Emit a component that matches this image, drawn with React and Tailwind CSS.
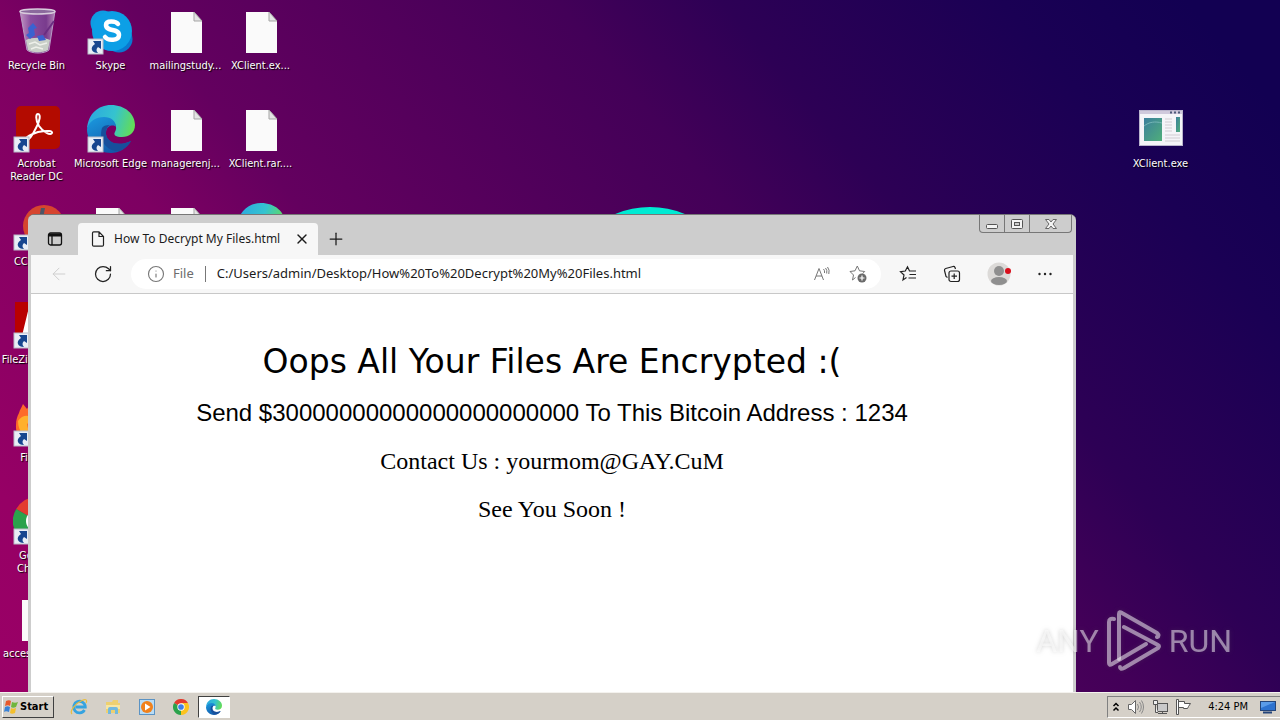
import { useState } from "react";
import { RotateCw, ArrowLeft, Plus, X, Info } from "lucide-react";

const page = {
  title: "How To Decrypt My Files.html",
  url: "C:/Users/admin/Desktop/How%20To%20Decrypt%20My%20Files.html",
};

function ShortcutArrow() {
  return (
    <g>
      <rect x="1" y="32" width="15" height="15" fill="#e9eef6" stroke="#b9bcc8" />
      <path d="M6 34h8v8l-3-2c-2 2-2 4 0 6-6 0-9-5-3-9z" fill="#17468f" />
    </g>
  );
}

function IconBox({ children, shortcut }) {
  return (
    <svg className="w-12 h-12 shrink-0" viewBox="0 0 48 48" aria-hidden="true">
      {children}
      {shortcut && <ShortcutArrow />}
    </svg>
  );
}

function FileIcon() {
  return (
    <IconBox>
      <path d="M9 5h23l8 9v32H9z" fill="#fafafa" />
      <path d="M32 5v9h8z" fill="#e4e4e4" stroke="#a5a5a5" />
    </IconBox>
  );
}

function RecycleIcon() {
  return (
    <IconBox>
      <defs>
        <linearGradient id="glass" x1="0" x2="1">
          <stop offset="0" stopColor="#d9c6e2" stopOpacity=".75" />
          <stop offset=".3" stopColor="#8f62ae" stopOpacity=".8" />
          <stop offset=".75" stopColor="#7a4a98" stopOpacity=".8" />
          <stop offset="1" stopColor="#cdb5d8" stopOpacity=".7" />
        </linearGradient>
      </defs>
      <path d="M7 4h35l-6 39c-4 4-18 4-22 0z" fill="url(#glass)" stroke="#b79cc6" />
      <path d="M13 33c5-3 18-3 24 0l-2 10c-5 3-16 3-20 0z" fill="#c9cfc8" />
      <path d="M16 37l6-2 5 3 7-2M18 42l5-2 7 2" stroke="#eef0ea" strokeWidth="1.500" fill="none" />
      <path d="M15 21l5-5 4 5-3 1 1 6-5 4-4-4 3-2zM24 29l6-1 3 5-7 1z" fill="#3b62d0" />
      <path d="M41 14l-10 14" stroke="#6b2e82" strokeWidth="2" />
      <ellipse cx="24.500" cy="4.500" rx="17.500" ry="2.500" fill="#8b6a9d" stroke="#d8cbdc" strokeWidth="1.500" />
    </IconBox>
  );
}

function SkypeIcon() {
  return (
    <IconBox shortcut>
      <circle cx="16" cy="16" r="12.500" fill="#0f9be2" />
      <circle cx="32" cy="32" r="13.500" fill="#0a79d0" />
      <circle cx="25" cy="24" r="20" fill="#0c9fe6" />
      <path d="M31 17c-2-3-12-4-12 1 0 7 13 3 13 10 0 6-11 6-14 2" fill="none" stroke="#fff" strokeWidth="4.500" strokeLinecap="round" />
    </IconBox>
  );
}

function AcrobatIcon() {
  return (
    <IconBox shortcut>
      <rect x="3" y="1" width="44" height="43" rx="5" fill="#b30b00" />
      <path
        d="M14 35c-4 0 1-5 11-8 10-2 15-1 14 1-1 3-9-1-13-7-4-7-3-12-1-12 3 0 2 7-2 14-3 6-7 12-9 12z"
        fill="none"
        stroke="#fff"
        strokeWidth="2"
      />
    </IconBox>
  );
}

function EdgeArt() {
  return (
    <>
      <defs>
        <linearGradient id="edgeTop" x1="0" y1=".3" x2="1" y2=".5">
          <stop offset="0" stopColor="#2ba8e0" />
          <stop offset=".55" stopColor="#35c3cf" />
          <stop offset="1" stopColor="#63dc57" />
        </linearGradient>
        <linearGradient id="edgeLeft" x1="0" y1="0" x2=".6" y2="1">
          <stop offset="0" stopColor="#1b9be0" />
          <stop offset="1" stopColor="#1257a8" />
        </linearGradient>
      </defs>
      <path d="M0 24C1 9 11 0 24 0c14 0 24 9 24 20 0 8-6 12-13 12-6 0-9-2-7-5 3-5 0-11-7-12C12 13 3 16 0 24z" fill="url(#edgeTop)" />
      <path d="M0 24c2-8 9-12 17-12 7 0 12 4 12 10-1-2-9-3-10 5-1 9 9 16 25 9-5 8-12 12-20 12C10 48 0 37 0 24z" fill="url(#edgeLeft)" />
      <path d="M15 23c-4 13 6 24 17 23 6-2 10-6 12-10-14 7-26 0-25-9 0-3 2-6 4-7-4 0-7 1-8 3z" fill="#174f9c" />
    </>
  );
}

function ChromeArt() {
  return (
    <>
      <path d="M24 24L3.200 12A24 24 0 0 1 44.800 12z" fill="#e33b2e" />
      <path d="M24 24L44.800 12A24 24 0 0 1 24 48z" fill="#fcc31e" />
      <path d="M24 24v24A24 24 0 0 1 3.200 12z" fill="#2ba24c" />
      <path d="M24 12h20.800L34 30z" fill="#fcc31e" />
      <circle cx="24" cy="24" r="11" fill="#fff" />
      <circle cx="24" cy="24" r="8.500" fill="#3f7fe8" />
    </>
  );
}

function EdgeIcon({ shortcut }) {
  return (
    <IconBox shortcut={shortcut}>
      <EdgeArt />
    </IconBox>
  );
}

function CCleanerIcon() {
  return (
    <IconBox shortcut>
      <circle cx="31" cy="23" r="21" fill="#d6452f" />
      <path d="M28 5h4l-3 16h-4z" fill="#4c5566" />
      <path d="M24 20l10 4-6 20H8c8-5 12-14 16-24z" fill="#f3cf9c" />
    </IconBox>
  );
}

function FileZillaIcon() {
  return (
    <IconBox shortcut>
      <rect x="2" y="1" width="44" height="44" fill="#b90000" />
      <path d="M16 6h22l-2 6H22l-2 9h10l-2 6H18l-4 16H7z" fill="#fff" />
    </IconBox>
  );
}

function FirefoxIcon() {
  return (
    <IconBox shortcut>
      <path d="M6 14c1-4 3-6 4-9l4 5c2-4 5-6 9-7 10 0 23 9 23 23 0 12-9 20-21 20S2 39 3 26c0-5 1-8 3-12z" fill="#fd6a2b" />
      <path d="M5 22c4-6 11-7 15-2l-6 5c1 10 8 13 16 12-8 7-25 2-25-15z" fill="#ffb02e" />
    </IconBox>
  );
}

function ChromeIcon() {
  return (
    <IconBox shortcut>
      <ChromeArt />
    </IconBox>
  );
}

function ProgramIcon() {
  return (
    <IconBox>
      <defs>
        <linearGradient id="pane" x1="0" y1="0" x2="1" y2="1">
          <stop offset="0" stopColor="#3c7f9d" />
          <stop offset="1" stopColor="#4fae7a" />
        </linearGradient>
      </defs>
      <rect x="2.500" y="5.500" width="43" height="35" fill="#f4f4f8" stroke="#b9b4cc" />
      <path d="M3 7.500h42" stroke="#cfc9dc" strokeWidth="3" />
      <path d="M33 7.500h2m2 0h2m2 0h2" stroke="#4d5878" strokeWidth="2" />
      <rect x="7" y="13" width="18" height="23" fill="url(#pane)" />
      <path d="M7 21c5-4 11-5 18-3" stroke="#76b5b6" fill="none" />
      <path d="M28 14h7m-7 3h7m-7 3h7m-7 3h7m-7 3h7m-7 4h15m-15 3h15m-15 3h15" stroke="#d0ccd2" />
      <rect x="39" y="12" width="4" height="15" fill="url(#pane)" />
    </IconBox>
  );
}

const desktopIcons = [
  { label: "Recycle Bin", Icon: RecycleIcon, cell: "col-start-1 row-start-1" },
  { label: "Acrobat\nReader DC", Icon: AcrobatIcon, cell: "col-start-1 row-start-2" },
  { label: "CCleaner", Icon: CCleanerIcon, cell: "col-start-1 row-start-3" },
  { label: "FileZilla Client", Icon: FileZillaIcon, cell: "col-start-1 row-start-4" },
  { label: "Firefox", Icon: FirefoxIcon, cell: "col-start-1 row-start-5" },
  { label: "Google\nChrome", Icon: ChromeIcon, cell: "col-start-1 row-start-6" },
  { label: "accessories...", Icon: FileIcon, cell: "col-start-1 row-start-7" },
  { label: "Skype", Icon: SkypeIcon, cell: "col-start-2 row-start-1" },
  { label: "Microsoft Edge", Icon: () => <EdgeIcon shortcut />, cell: "col-start-2 row-start-2" },
  { label: "", Icon: FileIcon, cell: "col-start-2 row-start-3" },
  { label: "mailingstudy...", Icon: FileIcon, cell: "col-start-3 row-start-1" },
  { label: "managerenj...", Icon: FileIcon, cell: "col-start-3 row-start-2" },
  { label: "", Icon: FileIcon, cell: "col-start-3 row-start-3" },
  { label: "XClient.ex...", Icon: FileIcon, cell: "col-start-4 row-start-1" },
  { label: "XClient.rar....", Icon: FileIcon, cell: "col-start-4 row-start-2" },
  { label: "", Icon: EdgeIcon, cell: "col-start-4 row-start-3" },
];

function DesktopIcon({ label, Icon, cell = "" }) {
  return (
    <button className={`flex flex-col items-center gap-1 ${cell}`} aria-label={label || "Desktop item"}>
      <Icon />
      <span className="text-[11px] leading-[13px] text-white text-center whitespace-pre [text-shadow:1px_1px_1px_#000]">
        {label}
      </span>
    </button>
  );
}

function WindowButtons() {
  return (
    <div className="ml-auto mr-px self-start flex h-[18px] border border-t-0 border-[#777] rounded-b divide-x divide-[#777]">
      <button className="w-[25px] flex items-center justify-center" aria-label="Minimize">
        <svg className="w-3 h-3" viewBox="0 0 12 12" fill="#f4f4f4" stroke="#555">
          <rect x=".5" y="6.500" width="11" height="4" rx="1" />
        </svg>
      </button>
      <button className="w-[25px] flex items-center justify-center" aria-label="Maximize">
        <svg className="w-3 h-3" viewBox="0 0 12 12" fill="#f4f4f4" stroke="#555">
          <rect x=".5" y="1.500" width="11" height="9" rx="1" />
          <rect x="3.500" y="4.500" width="5" height="3" fill="#ccc" />
        </svg>
      </button>
      <button className="w-[41px] flex items-center justify-center" aria-label="Close">
        <svg className="w-3 h-3" viewBox="0 0 12 12" fill="#f4f4f4" stroke="#666">
          <path d="M.5 1.500h3.500l2 2.500 2-2.500h3.500L8 6l3.500 4.500H8L6 8l-2 2.500H.5L4 6z" />
        </svg>
      </button>
    </div>
  );
}

function TabStrip() {
  return (
    <div className="flex items-end h-10 bg-[#cdcdcd] text-[#1b1b1b]">
      <button className="w-[47px] h-8 flex items-center justify-center" aria-label="Tab actions">
        <svg className="w-4 h-4" viewBox="0 0 16 16" fill="none" stroke="#111" strokeWidth="1.300">
          <rect x="1.500" y="2" width="13" height="12" rx="2" />
          <path d="M2 4h12" strokeWidth="3" />
          <path d="M5 5v9" />
        </svg>
      </button>
      <div className="w-60 h-8 flex items-center pl-3 pr-2 gap-2 rounded-t bg-[#f7f7f7]">
        <svg className="w-4 h-4 shrink-0" viewBox="0 0 16 16" fill="none" stroke="#222" strokeWidth="1.200">
          <path d="M2.500 2Q2.500 .8 3.700 .8H9l4.500 4.700v8.500q0 1.200-1.200 1.200H3.700q-1.200 0-1.200-1.200zM9 1v4.500h4.500" />
        </svg>
        <span className="flex-1 text-xs whitespace-nowrap">{page.title}</span>
        <button aria-label="Close tab">
          <X className="w-4 h-4" strokeWidth={2} />
        </button>
      </div>
      <button className="w-9 h-8 flex items-center justify-center" aria-label="New tab">
        <Plus className="w-5 h-5" strokeWidth={1.5} />
      </button>
      <WindowButtons />
    </div>
  );
}

function Toolbar() {
  const [url, setUrl] = useState(page.url);

  return (
    <div className="flex items-center h-[39px] bg-[#f7f7f7] border-b border-[#c8c8c8] text-[#222]">
      <button className="w-14 flex justify-center text-[#cfcfcf]" aria-label="Back">
        <ArrowLeft className="w-5 h-5" strokeWidth={1.2} />
      </button>
      <button className="w-8 flex justify-center" aria-label="Refresh">
        <RotateCw className="w-5 h-5" strokeWidth={1.5} />
      </button>
      <div className="flex-1 min-w-0 h-[30px] ml-3 flex items-center gap-2 pl-4 pr-3.5 bg-white rounded-full text-[13px]">
        <Info className="w-[18px] h-[18px] shrink-0 text-[#777]" strokeWidth={1.5} />
        <label htmlFor="address" className="text-[#6d6d6d]">File</label>
        <span className="w-px h-4 mx-[3px] bg-[#777]" />
        <input
          id="address"
          className="flex-1 min-w-0 outline-none text-[#1b1b1b]"
          value={url}
          onChange={(e) => setUrl(e.target.value)}
        />
        <button className="mr-2.5" aria-label="Read aloud">
          <svg className="w-[18px] h-[18px]" viewBox="0 0 18 18" fill="none" stroke="#777">
            <path d="M1.500 15L6 3.500l4.500 11.500M3 11h6M10.500 4q1.500 1.500 1 4M12.500 3q2 2 1.200 5.500M14.500 2q2.500 3 1.300 7" />
          </svg>
        </button>
        <button aria-label="Add to favorites">
          <svg className="w-[18px] h-[18px]" viewBox="0 0 18 18" fill="none" stroke="#777">
            <path d="M6.500 12.500L3.500 15l1-5L1 6.500l5-.7L8.300 1l2.200 4.800 5.200.7-2 2" />
            <circle cx="13" cy="13" r="4.500" fill="#6a6a6a" stroke="none" />
            <path d="M13 10.500v5M10.500 13h5" stroke="#fff" strokeWidth="1.200" />
          </svg>
        </button>
      </div>
      <div className="flex items-center pl-[18px] pr-5 gap-[26px]">
        <button aria-label="Favorites">
          <svg className="w-[18px] h-[18px]" viewBox="0 0 18 18" fill="none" stroke="#222" strokeWidth="1.200">
            <path d="M7.500 12.500L4 15l1-5L1.500 6.700l4.800-.7L8.500 1.800 10.500 6H17M10.500 9.500H17M9.500 13H17" />
          </svg>
        </button>
        <button aria-label="Collections">
          <svg className="w-[18px] h-[18px]" viewBox="0 0 18 18" fill="none" stroke="#222" strokeWidth="1.200">
            <rect x="6" y="6" width="10.500" height="10.500" rx="2" />
            <path d="M11.200 8.500v5.500M8.500 11.200H14M4.500 12.500L3 11.500 1.500 5.500Q1.200 4 2.700 3.500L10 1.500q1.500-.3 2 1l.5 1.500" />
          </svg>
        </button>
        <button aria-label="Profile">
          <svg className="w-6 h-6" viewBox="0 0 24 24">
            <circle cx="12" cy="12" r="11.500" fill="#dcdad8" />
            <circle cx="12" cy="9" r="5" fill="#8f8f8f" />
            <ellipse cx="12" cy="19" rx="8" ry="4" fill="#8f8f8f" />
            <circle cx="21" cy="9" r="3" fill="#d90f1c" />
          </svg>
        </button>
        <button aria-label="Settings and more">
          <svg className="w-4 h-4" viewBox="0 0 16 16" fill="#222">
            <circle cx="2.500" cy="8" r="1.200" />
            <circle cx="8" cy="8" r="1.200" />
            <circle cx="13.500" cy="8" r="1.200" />
          </svg>
        </button>
      </div>
    </div>
  );
}

function BrowserWindow() {
  return (
    <section className="absolute left-7 right-[204px] top-[214px] bottom-0 flex flex-col px-[3px] bg-[#cdcdcd] border-t border-[#777] rounded-t-md overflow-hidden font-['Noto_Sans','Open_Sans',sans-serif]">
      <TabStrip />
      <Toolbar />
      <article className="flex-1 pt-11 bg-white text-black text-center text-2xl leading-[48px]">
        <h1 className="mb-[3px] text-[33px] leading-[48px] font-['DejaVu_Sans',sans-serif]">
          Oops All Your Files Are Encrypted :(
        </h1>
        <p className="font-['Liberation_Sans',sans-serif]">
          Send $30000000000000000000000 To This Bitcoin Address : 1234
        </p>
        <p className="font-['Liberation_Serif',serif]">Contact Us : yourmom@GAY.CuM</p>
        <p className="font-['Liberation_Serif',serif]">See You Soon !</p>
      </article>
    </section>
  );
}

function Watermark() {
  return (
    <div className="absolute right-12 bottom-5 flex items-center gap-2 text-[32px] leading-[62px] text-white/50 font-['Roboto',sans-serif] [filter:drop-shadow(0_0_2px_rgba(90,90,90,0.5))]">
      <span>ANY</span>
      <svg className="w-[54px] h-[62px]" viewBox="0 0 54 62" fill="none" stroke="currentColor" strokeWidth="4" strokeLinejoin="round" strokeLinecap="round">
        <path d="M7 9Q2 8 2 12v41q0 3 3 1l34-20" />
        <path d="M12 49V4q0-3 3-1l35 20q3 3 0 4" />
        <path d="M17 17l34 18q2 1 0 3L17 58q-4 2-4-1" />
      </svg>
      <span>RUN</span>
    </div>
  );
}

function StartLogo() {
  return (
    <svg className="w-4 h-4" viewBox="0 0 16 16" aria-hidden="true">
      <path d="M3 2c2-1 4-1 5 0L7 7c-1-1-3-1-5 0z" fill="#e8592b" />
      <path d="M9 3c2 1 4 1 6 0l-2 5c-2 1-4 1-5 0z" fill="#6fb63d" />
      <path d="M2 8c2-1 3-1 5 0l-1 5c-2-1-4-1-5 0z" fill="#3a82d6" />
      <path d="M8 9c1 1 3 1 5 0l-1 5c-2 1-4 1-5 0z" fill="#f4bf2c" />
    </svg>
  );
}

function Taskbar() {
  return (
    <footer className="h-7 shrink-0 flex items-center pt-px pl-0.5 bg-[#d5d0c8] border-t border-[#f4f2ee] text-[11px] text-black">
      <button className="h-[22px] w-[52px] flex items-center gap-px font-bold border border-t-white border-l-white border-r-[#404040] border-b-[#404040]">
        <StartLogo />
        Start
      </button>
      <nav className="ml-2 flex items-center">
        <button className="w-[34px] flex justify-center" aria-label="Internet Explorer">
          <svg className="w-[18px] h-[18px]" viewBox="0 0 18 18" fill="none">
            <path d="M14.500 12a5.800 5.800 0 1 1 .8-3H5.500" stroke="#35a3e0" strokeWidth="2.800" />
            <path d="M2 16C-1 13 6 5 12 2.500c4-2 5.500-.5 4 2.500" stroke="#e9bd3d" strokeWidth="1.200" />
          </svg>
        </button>
        <button className="w-[34px] flex justify-center" aria-label="File Explorer">
          <svg className="w-4 h-4" viewBox="0 0 16 16">
            <path d="M1 3h6l1-2h5v3h2v10H1z" fill="#edd070" />
            <path d="M1 6h14v4H1z" fill="#f7e6a2" />
            <path d="M3 15v-5q0-2 2-2h6q2 0 2 2v5h-3v-4H6v4z" fill="#72b9de" />
          </svg>
        </button>
        <button className="w-[34px] flex justify-center" aria-label="Media Player">
          <svg className="w-4 h-4" viewBox="0 0 16 16">
            <rect x=".5" y=".5" width="15" height="15" fill="#b9dcf5" stroke="#5b93c4" />
            <circle cx="8" cy="8" r="6" fill="#f1811b" />
            <path d="M6 4.500v7L11.500 8z" fill="#fff" />
          </svg>
        </button>
        <button className="w-[34px] flex justify-center" aria-label="Chrome">
          <svg className="w-4 h-4" viewBox="0 0 48 48"><ChromeArt /></svg>
        </button>
        <button className="w-8 h-[22px] flex items-center justify-center bg-white border border-t-[#404040] border-l-[#404040] border-r-white border-b-white" aria-label="Microsoft Edge">
          <svg className="w-4 h-4" viewBox="0 0 48 48"><EdgeArt /></svg>
        </button>
      </nav>
      <div className="ml-auto h-[22px] flex items-center gap-2 px-1 border border-r-0 border-t-[#808080] border-l-[#808080] border-b-white">
        <button aria-label="Show hidden icons">
          <svg className="w-2 h-3" viewBox="0 0 8 12" fill="none" stroke="#000" strokeWidth="1.500">
            <path d="M1.500 5L4 2.500 6.500 5M1.500 9.500L4 7l2.500 2.500" />
          </svg>
        </button>
        <button aria-label="Volume">
          <svg className="w-4 h-4" viewBox="0 0 16 16" fill="#fff" stroke="#666">
            <path d="M.5 5.500h3l4-4v13l-4-4h-3z" />
            <path d="M9.500 5q2 3 0 6M11.500 3q3.500 5 0 10M13.500 1.500q4 6.500 0 13" fill="none" stroke="#888" />
          </svg>
        </button>
        <button aria-label="Network">
          <svg className="w-4 h-4" viewBox="0 0 16 16" fill="#eee" stroke="#555">
            <rect x="5.500" y="4.500" width="10" height="8" fill="#c9c9c9" />
            <path d="M6 14.500h9M10.500 12.500v2" />
            <path d="M1.500 1.500h4v4h-4zM3.500 6v7.500H6" />
          </svg>
        </button>
        <button aria-label="Action Center">
          <svg className="w-4 h-4" viewBox="0 0 16 16" fill="#fff" stroke="#555">
            <path d="M.5.500h2v15h-2zM2.500 2.500h6v2h6l-2 3-1 2h-4v-1h-5z" />
          </svg>
        </button>
        <time className="ml-2">4:24 PM</time>
        <button className="ml-1" aria-label="Show desktop">
          <svg className="w-4 h-4" viewBox="0 0 16 16">
            <rect x=".5" y="2.500" width="15" height="9" fill="#2d72cf" stroke="#24457a" />
            <path d="M1 3h14L1 9z" fill="#5a9be8" />
            <path d="M3 13.500h9" stroke="#24457a" strokeWidth="2" />
          </svg>
        </button>
      </div>
    </footer>
  );
}

export default function App() {
  return (
    <div className="h-screen flex flex-col overflow-hidden font-['Tahoma','DejaVu_Sans_Condensed',sans-serif]">
      <main className="relative flex-1 min-h-0 overflow-hidden bg-[linear-gradient(50deg,#9a0066_0%,#960065_9%,#7d0062_30%,#64005f_38%,#430058_61%,#2d0055_70%,#1a0054_85%,#120052_95%)]">
        <div className="grid grid-cols-[73px_75px_75px_75px] auto-rows-[98px] justify-start items-start pt-[7px]">
          {desktopIcons.map((item) => (
            <DesktopIcon key={item.cell} {...item} />
          ))}
        </div>
        <div className="absolute top-[105px] right-[82px] w-[75px] flex justify-center">
          <DesktopIcon label="XClient.exe" Icon={ProgramIcon} />
        </div>
        {/* wallpaper logo, mostly behind the browser */}
        <div className="absolute left-[559px] top-[207px] w-[182px] h-[182px] rounded-full bg-[#00ead3]" />
        <BrowserWindow />
        <Watermark />
      </main>
      <Taskbar />
    </div>
  );
}
